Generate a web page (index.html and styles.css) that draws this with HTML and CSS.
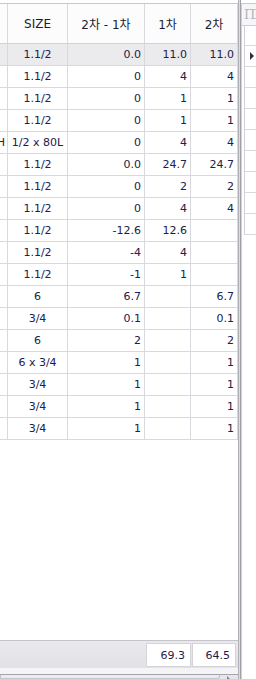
FILE: index.html
```html
<!DOCTYPE html>
<html>
<head>
<meta charset="utf-8">
<link rel="stylesheet" href="styles.css">
</head>
<body>
<div class="app">
  <div class="main">
    <div class="grid">
      <div class="row head">
        <div class="cell"></div>
        <div class="cell c">SIZE</div>
        <div class="cell c">2차 - 1차</div>
        <div class="cell c">1차</div>
        <div class="cell c">2차</div>
      </div>
      <div class="row sel"><div class="cell"></div><div class="cell c">1.1/2</div><div class="cell r">0.0</div><div class="cell r">11.0</div><div class="cell r">11.0</div></div>
      <div class="row"><div class="cell"></div><div class="cell c">1.1/2</div><div class="cell r">0</div><div class="cell r">4</div><div class="cell r">4</div></div>
      <div class="row"><div class="cell"></div><div class="cell c">1.1/2</div><div class="cell r">0</div><div class="cell r">1</div><div class="cell r">1</div></div>
      <div class="row"><div class="cell"></div><div class="cell c">1.1/2</div><div class="cell r">0</div><div class="cell r">1</div><div class="cell r">1</div></div>
      <div class="row"><div class="cell cut">H</div><div class="cell c">1/2 x 80L</div><div class="cell r">0</div><div class="cell r">4</div><div class="cell r">4</div></div>
      <div class="row"><div class="cell"></div><div class="cell c">1.1/2</div><div class="cell r">0.0</div><div class="cell r">24.7</div><div class="cell r">24.7</div></div>
      <div class="row"><div class="cell"></div><div class="cell c">1.1/2</div><div class="cell r">0</div><div class="cell r">2</div><div class="cell r">2</div></div>
      <div class="row"><div class="cell"></div><div class="cell c">1.1/2</div><div class="cell r">0</div><div class="cell r">4</div><div class="cell r">4</div></div>
      <div class="row"><div class="cell"></div><div class="cell c">1.1/2</div><div class="cell r">-12.6</div><div class="cell r">12.6</div><div class="cell r"></div></div>
      <div class="row"><div class="cell"></div><div class="cell c">1.1/2</div><div class="cell r">-4</div><div class="cell r">4</div><div class="cell r"></div></div>
      <div class="row"><div class="cell"></div><div class="cell c">1.1/2</div><div class="cell r">-1</div><div class="cell r">1</div><div class="cell r"></div></div>
      <div class="row"><div class="cell"></div><div class="cell c">6</div><div class="cell r">6.7</div><div class="cell r"></div><div class="cell r">6.7</div></div>
      <div class="row"><div class="cell"></div><div class="cell c">3/4</div><div class="cell r">0.1</div><div class="cell r"></div><div class="cell r">0.1</div></div>
      <div class="row"><div class="cell"></div><div class="cell c">6</div><div class="cell r">2</div><div class="cell r"></div><div class="cell r">2</div></div>
      <div class="row"><div class="cell"></div><div class="cell c">6 x 3/4</div><div class="cell r">1</div><div class="cell r"></div><div class="cell r">1</div></div>
      <div class="row"><div class="cell"></div><div class="cell c">3/4</div><div class="cell r">1</div><div class="cell r"></div><div class="cell r">1</div></div>
      <div class="row"><div class="cell"></div><div class="cell c">3/4</div><div class="cell r">1</div><div class="cell r"></div><div class="cell r">1</div></div>
      <div class="row"><div class="cell"></div><div class="cell c">3/4</div><div class="cell r">1</div><div class="cell r"></div><div class="cell r">1</div></div>
    </div>
    <div class="spacer"></div>
    <div class="footer">
      <div class="total">69.3</div>
      <div class="total">64.5</div>
    </div>
    <div class="strip"></div>
    <div class="hscroll">
      <div class="thumb"></div>
      <div class="arrow"></div>
    </div>
  </div>
  <div class="splitter"></div>
  <div class="side">
    <div class="side-head">ПП</div>
    <div class="side-body">
      <div class="srow tall"></div>
      <div class="srow"><span class="tri"></span></div>
      <div class="srow"></div>
      <div class="srow"></div>
      <div class="srow"></div>
      <div class="srow"></div>
      <div class="srow"></div>
      <div class="srow"></div>
      <div class="srow"></div>
      <div class="srow"></div>
    </div>
  </div>
</div>
</body>
</html>
```

FILE: styles.css
```css
* { box-sizing: border-box; }
html, body { margin: 0; padding: 0; background: #fff; }
body {
  width: 256px;
  height: 679px;
  overflow: hidden;
  font-family: "DejaVu Sans", "Noto Sans CJK KR", sans-serif;
  font-size: 11px;
  color: #20204a;
}
.app {
  display: grid;
  grid-template-columns: 238px 3px 15px;
  height: 679px;
}
.main {
  display: flex;
  flex-direction: column;
  height: 679px;
  padding-top: 3px;
  min-width: 0;
}
.grid {
  border-top: 1px solid #c8c8d0;
}
.row {
  display: grid;
  grid-template-columns: 8px 60px 77px 46px 47px;
  height: 22px;
}
.row.head { height: 40px; background: #fcfcfc; color: #1c1c30; }
.row.sel { background: #ebebee; }
.cell {
  border-right: 1px solid #d8d8de;
  border-bottom: 1px solid #d8d8de;
  display: flex;
  align-items: center;
  white-space: nowrap;
  overflow: hidden;
  padding: 0 3px 0 2px;
}
.row.head .cell { border-bottom-color: #d0d0d6; font-size: 12px; }
.cell.c { justify-content: center; padding: 0; }
.cell.r { justify-content: flex-end; }
.cell.cut { padding: 0; justify-content: flex-end; padding-right: 2px; }
.spacer { flex: 1; }
.footer {
  height: 28px;
  border-top: 1px solid #c4c4ca;
  background: linear-gradient(#e9e9ed, #e1e1e6);
  display: flex;
  justify-content: flex-end;
  align-items: flex-start;
  gap: 1px;
  padding: 2px 2px 0 0;
}
.total {
  height: 24px;
  background: #fff;
  border: 1px solid #d4d4da;
  display: flex;
  align-items: center;
  justify-content: flex-end;
  padding-right: 5px;
  color: #1c1c48;
}
.total:first-child { width: 45px; }
.total:last-child { width: 44px; }
.strip { height: 6px; background: #f4f4f6; }
.hscroll {
  height: 5px;
  border-top: 1px solid #a4a4ac;
  background: #e6e6ea;
  display: flex;
  align-items: flex-start;
  padding-right: 8px;
}
.thumb {
  flex: 0 0 220px;
  height: 4px;
  border: 1px solid #c4c4cc;
  border-top: none;
  border-radius: 0 0 3px 0;
  background: #ececf0;
}
.arrow {
  margin: 1px 0 0 7px;
  width: 0; height: 0;
  border-left: 3px solid #808088;
  border-top: 3px solid transparent;
  border-bottom: 3px solid transparent;
}
.splitter {
  border-left: 1px solid #b0b0b8;
  border-right: 1px solid #a0a0a8;
  background: #dcdce2;
}
.side {
  border-left: 1px solid #d0d0d6;
  margin-top: 3px;
  border-top: 1px solid #c8c8d0;
  background: #fff;
  overflow: hidden;
}
.side-head {
  height: 22px;
  background: #f6f6f8;
  border-bottom: 1px solid #d0d0d6;
  font-family: "DejaVu Serif", serif;
  font-size: 13px;
  color: #b4b4bc;
  padding: 3px 0 0 2px;
  white-space: nowrap;
  letter-spacing: -1px;
}
.side-body { margin-left: 2px; border-left: 1px solid #d0d0d6; }
.srow {
  height: 21px;
  border-bottom: 1px solid #d8d8de;
  display: flex;
  align-items: center;
  padding-left: 5px;
}
.srow.tall { height: 20px; }
.tri {
  width: 0; height: 0;
  border-left: 4px solid #303040;
  border-top: 4px solid transparent;
  border-bottom: 4px solid transparent;
}
```
